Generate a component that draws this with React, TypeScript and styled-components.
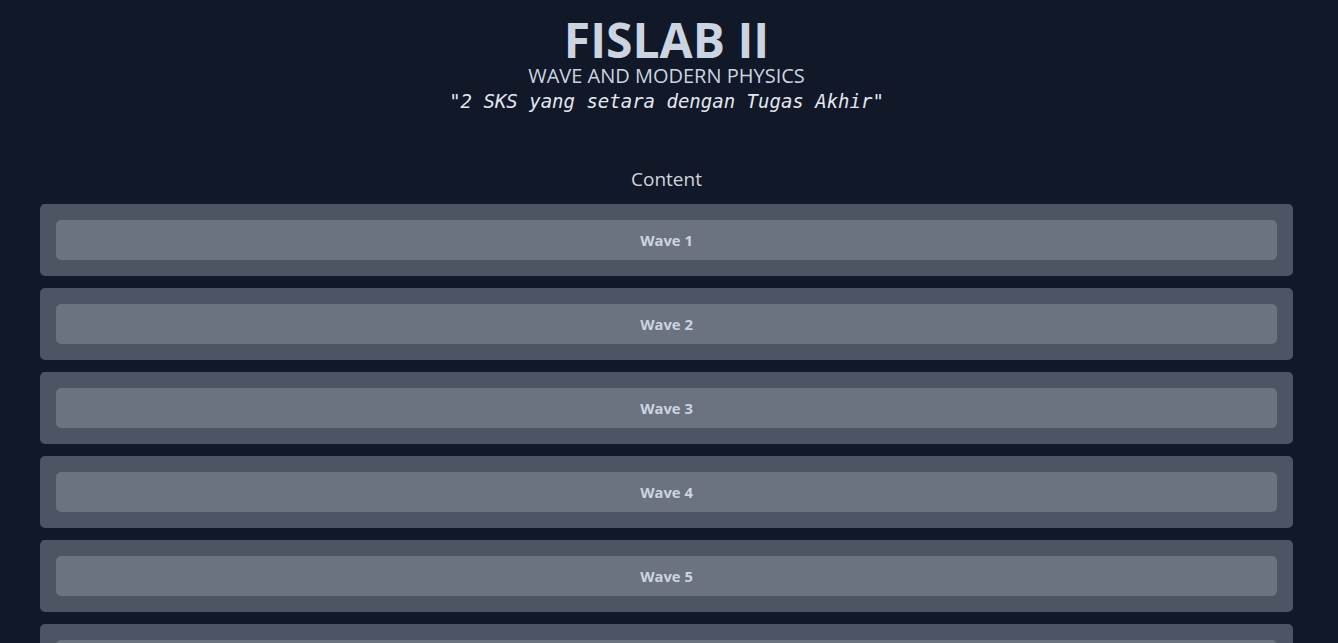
import React from "react";
import styled, { createGlobalStyle } from "styled-components";

const Global = createGlobalStyle`
  html, body { margin: 0; padding: 0; background: #111827; }
  body { font-family: "Open Sans", "Noto Sans", sans-serif; color: #d1d5db; }
`;

const Page = styled.div`
  min-height: 643px;
  padding-right: 5px;
  background: #111827;
`;

const Header = styled.header`
  display: flex;
  flex-direction: column;
  align-items: center;
  padding-top: 15px;
`;

const Title = styled.h1`
  margin: 0;
  font-size: 48px;
  line-height: 50px;
  font-weight: 700;
  color: #cbd5e1;
`;

const Subtitle = styled.h2`
  margin: 0;
  font-size: 20px;
  line-height: 22px;
  font-weight: 400;
  color: #cbd5e1;
`;

const Quote = styled.p`
  margin: 0;
  font-family: "DejaVu Sans Mono", "Liberation Mono", monospace;
  font-style: italic;
  font-size: 19px;
  line-height: 28px;
  color: #e2e8f0;
`;

const SectionTitle = styled.h3`
  margin: 50px 0 11px;
  text-align: center;
  font-size: 19px;
  line-height: 28px;
  font-weight: 400;
  color: #d1d5db;
`;

const List = styled.div`
  display: flex;
  flex-direction: column;
  gap: 12px;
  margin: 0 40px;
`;

const Card = styled.div`
  background: #4b5563;
  border-radius: 5px;
  padding: 16px;
`;

const WaveButton = styled.button`
  display: block;
  width: 100%;
  height: 40px;
  border: none;
  border-radius: 5px;
  background: #6b7280;
  color: #cbd5e1;
  font-family: "Open Sans", "Noto Sans", sans-serif;
  font-weight: 700;
  font-size: 14.8px;
  cursor: pointer;
`;

const waves = ["Wave 1", "Wave 2", "Wave 3", "Wave 4", "Wave 5", "Wave 6"];

export default function App() {
  return (
    <Page>
      <Global />
      <Header>
        <Title>FISLAB II</Title>
        <Subtitle>WAVE AND MODERN PHYSICS</Subtitle>
        <Quote>"2 SKS yang setara dengan Tugas Akhir"</Quote>
      </Header>
      <SectionTitle>Content</SectionTitle>
      <List>
        {waves.map((w) => (
          <Card key={w}>
            <WaveButton>{w}</WaveButton>
          </Card>
        ))}
      </List>
    </Page>
  );
}
